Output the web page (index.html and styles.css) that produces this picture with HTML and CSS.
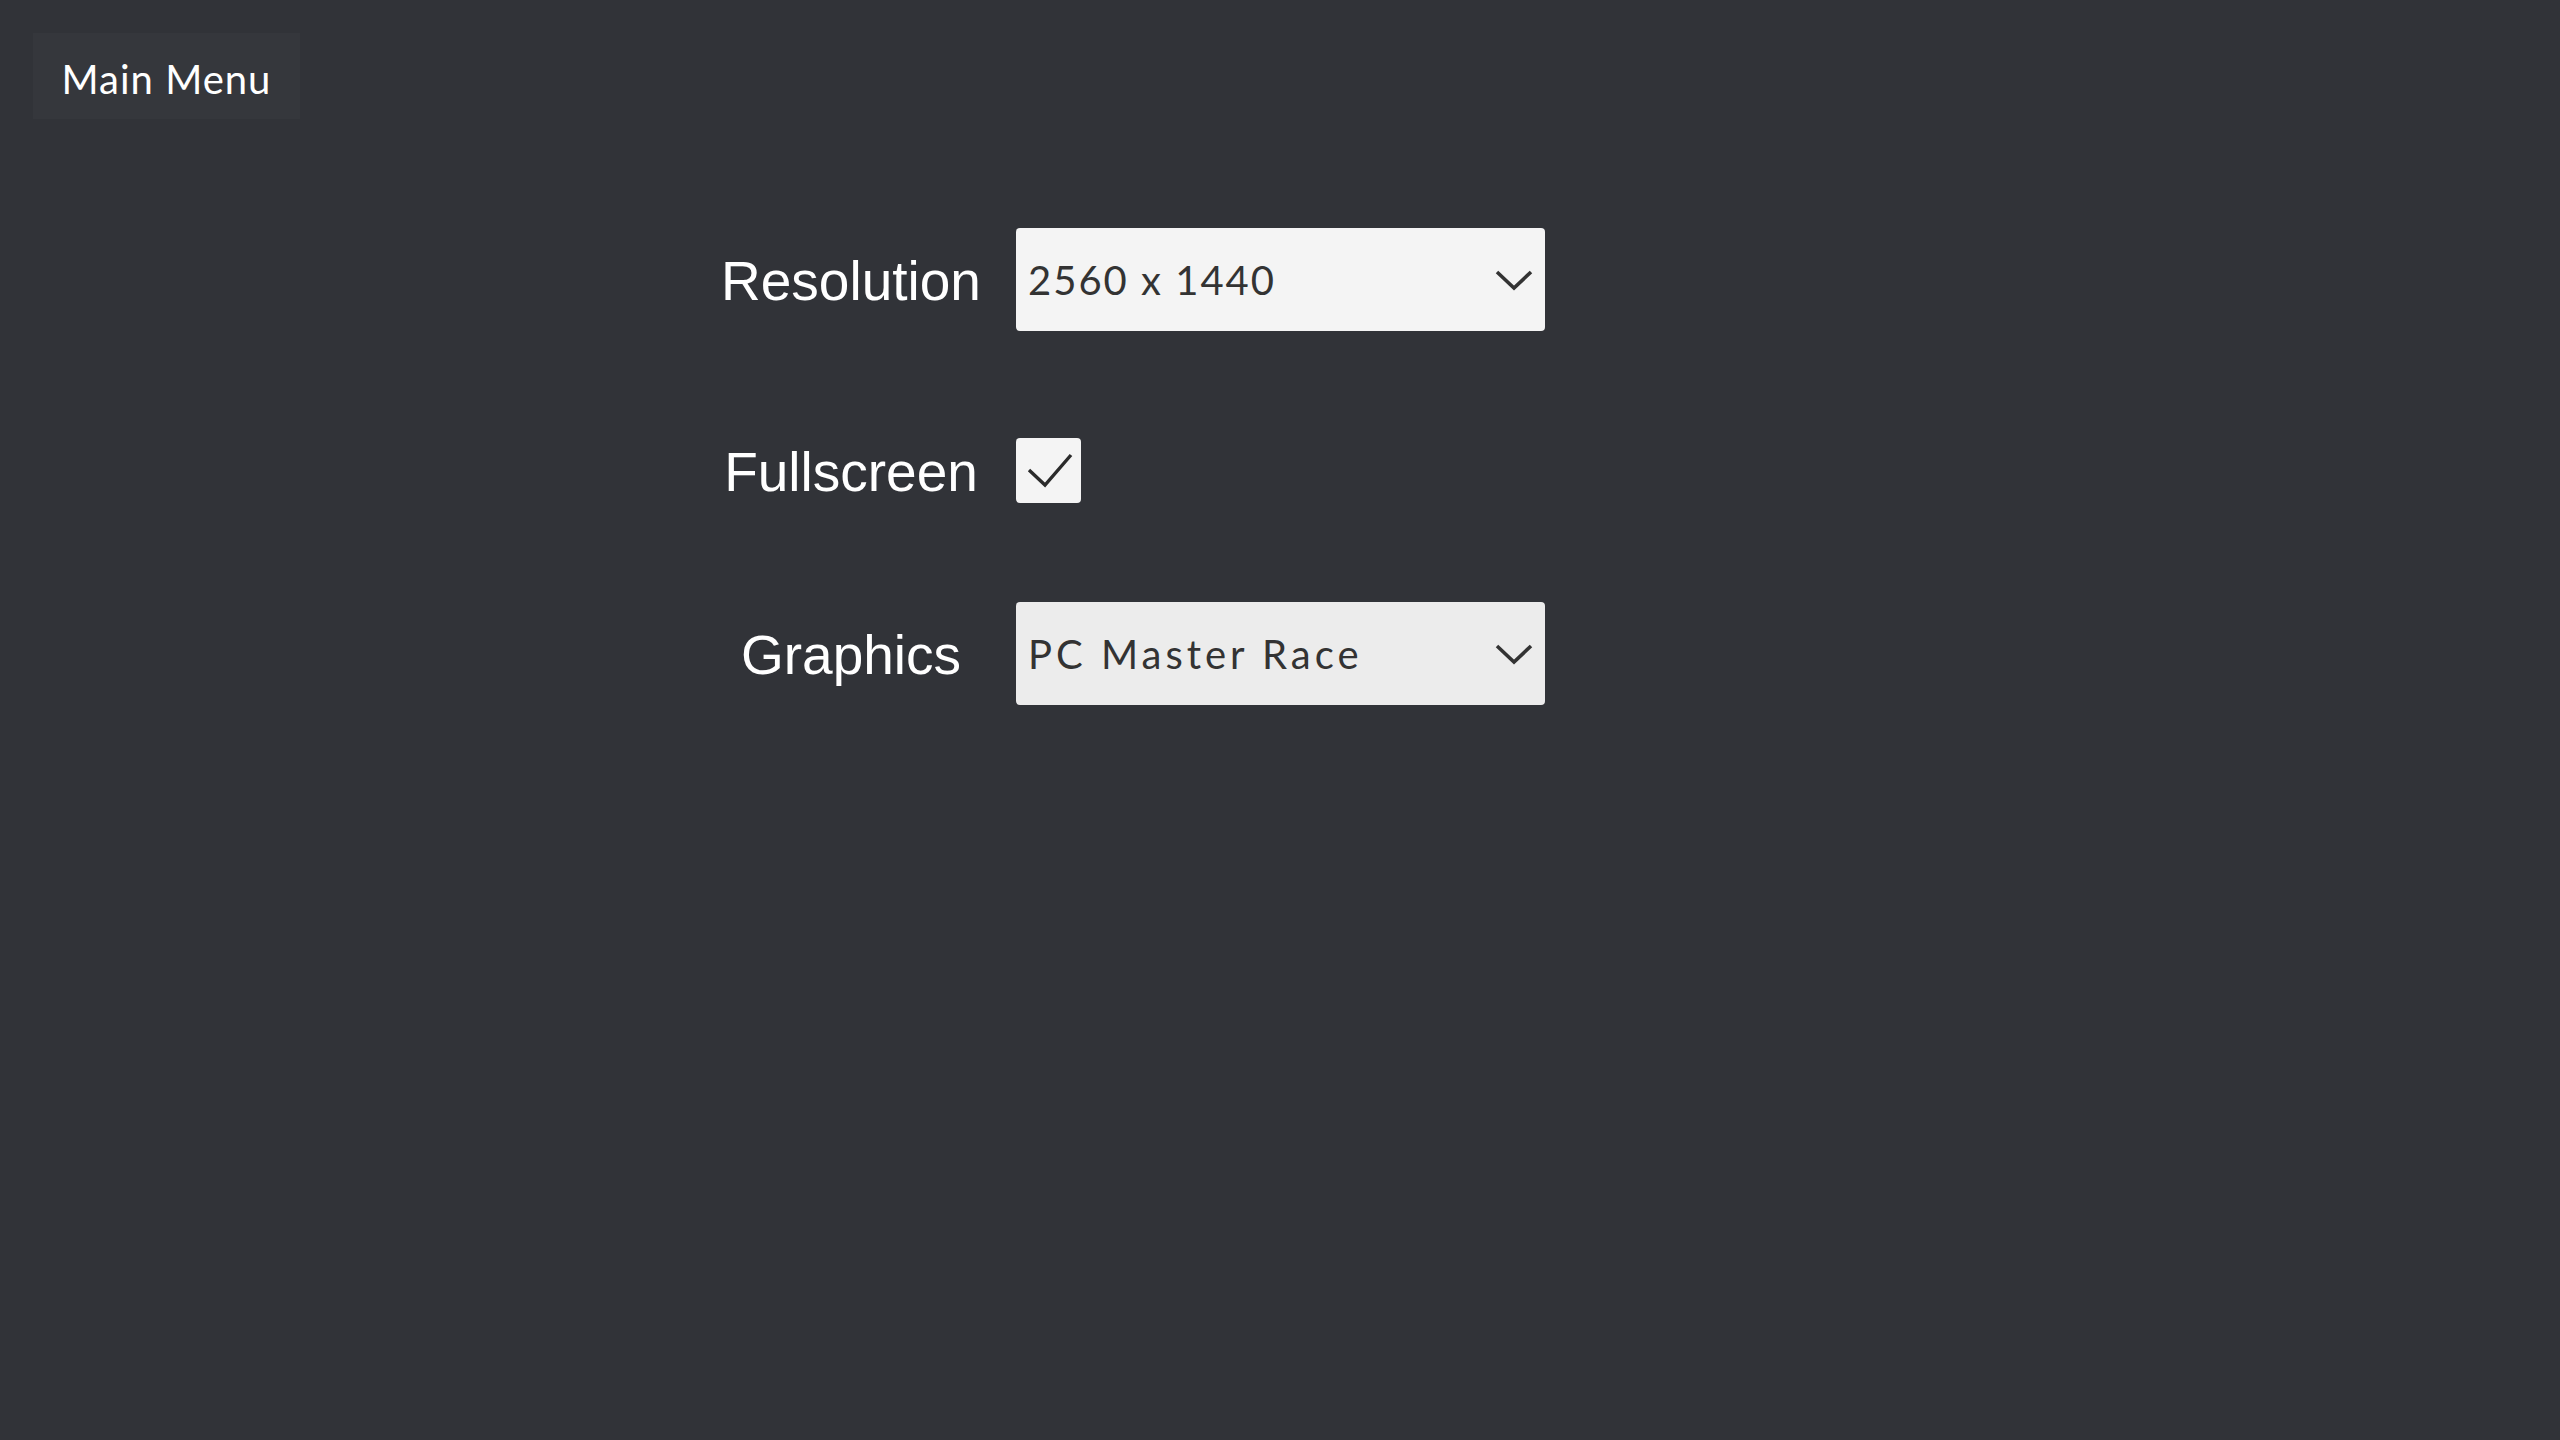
FILE: index.html
```html
<!DOCTYPE html>
<html lang="en">
<head>
<meta charset="utf-8">
<title>Settings</title>
<link rel="stylesheet" href="styles.css">
</head>
<body>
  <header class="topbar">
    <a class="menu-button" href="#">Main Menu</a>
  </header>
  <main class="settings">
    <div class="row">
      <label class="label" for="res">Resolution</label>
      <div class="select-wrap">
        <select id="res" class="select select-light">
          <option>2560 x 1440</option>
        </select>
        <svg class="chevron" viewBox="0 0 38 22" width="38" height="22"><path d="M2 3 L19 19 L36 3" fill="none" stroke="#333" stroke-width="3.6"/></svg>
      </div>
    </div>
    <div class="row row-checkbox">
      <span class="label">Fullscreen</span>
      <span class="checkbox">
        <svg viewBox="0 0 65 65" width="65" height="65"><path d="M13 32 L29 47 L55 17" fill="none" stroke="#2b2b2b" stroke-width="3.4"/></svg>
      </span>
    </div>
    <div class="row">
      <label class="label" for="gfx">Graphics</label>
      <div class="select-wrap">
        <select id="gfx" class="select select-dim">
          <option>PC Master Race</option>
        </select>
        <svg class="chevron" viewBox="0 0 38 22" width="38" height="22"><path d="M2 3 L19 19 L36 3" fill="none" stroke="#333" stroke-width="3.6"/></svg>
      </div>
    </div>
  </main>
</body>
</html>
```

FILE: styles.css
```css
html, body {
  margin: 0;
  padding: 0;
  background: #313338;
  height: 100%;
}

body {
  font-family: "Liberation Sans", Arial, sans-serif;
}

.topbar {
  padding: 33px 0 0 33px;
}

.menu-button {
  display: flex;
  align-items: center;
  justify-content: center;
  width: 267px;
  height: 86px;
  box-sizing: border-box;
  padding-top: 6px;
  background: #35373c;
  color: #ffffff;
  text-decoration: none;
  font-family: Lato, "Noto Sans", sans-serif;
  font-size: 40px;
  letter-spacing: 1px;
}

.settings {
  display: flex;
  flex-direction: column;
  gap: 99px;
  padding-left: 716px;
  margin-top: 109px;
}

.row {
  display: flex;
  align-items: center;
  gap: 30px;
}

.row-checkbox {
  padding-top: 8px;
}

.label {
  width: 270px;
  text-align: center;
  color: #ffffff;
  font-size: 55px;
  line-height: 56px;
  padding-top: 3px;
}

.select-wrap {
  position: relative;
  width: 529px;
  height: 103px;
}

.select {
  appearance: none;
  -webkit-appearance: none;
  width: 100%;
  height: 100%;
  border: none;
  border-radius: 4px;
  padding: 0 60px 0 12px;
  margin: 0;
  color: #333333;
  font-family: Lato, "Noto Sans", sans-serif;
  font-size: 40px;
  letter-spacing: 2px;
  outline: none;
}

.select-light {
  background: #f4f4f4;
}

.select-dim {
  background: #ececec;
  letter-spacing: 4px;
}

.chevron {
  position: absolute;
  right: 12px;
  top: 41px;
  pointer-events: none;
}

.checkbox {
  display: block;
  width: 65px;
  height: 65px;
  background: #f4f4f4;
  border-radius: 4px;
}

.checkbox svg {
  display: block;
}
```
